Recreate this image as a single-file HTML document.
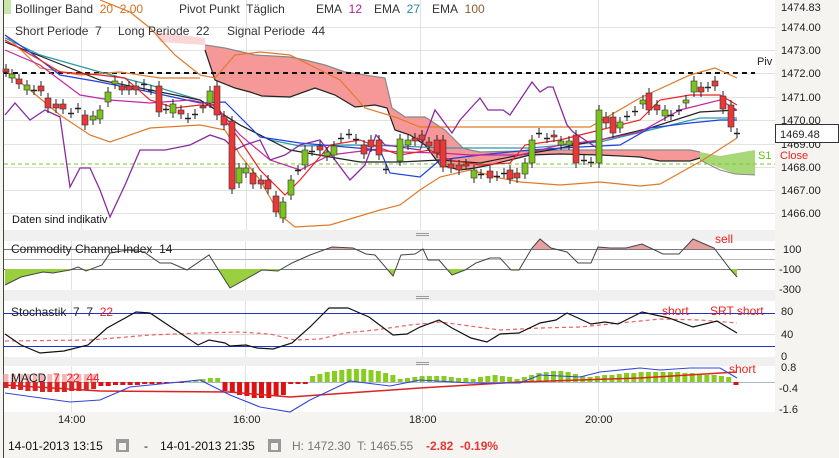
<!DOCTYPE html>
<html><head><meta charset="utf-8"><style>
html,body{margin:0;padding:0;background:#f5f4f0;width:839px;height:458px;overflow:hidden;font-family:"Liberation Sans",sans-serif}
svg{position:absolute;left:0;top:0}
</style></head><body>
<svg id="s" width="839" height="458" xmlns="http://www.w3.org/2000/svg" font-family="Liberation Sans, sans-serif">
<rect x="4" y="0" width="771" height="230" fill="#fff"/>
<rect x="4" y="241" width="771" height="49" fill="#fff"/>
<rect x="4" y="301" width="771" height="56" fill="#fff"/>
<rect x="4" y="366" width="771" height="46" fill="#fff"/>
<line x1="3.5" y1="0" x2="3.5" y2="458" stroke="#444"/>
<rect x="4" y="230" width="771" height="11" fill="#f0f0f0"/>
<rect x="4" y="290" width="771" height="11" fill="#f0f0f0"/>
<rect x="4" y="357" width="771" height="9" fill="#f0f0f0"/>
<g stroke="#999" stroke-width="1"><line x1="416" y1="233.5" x2="429" y2="233.5"/><line x1="416" y1="235.5" x2="429" y2="235.5"/><line x1="416" y1="296.5" x2="429" y2="296.5"/><line x1="416" y1="298.5" x2="429" y2="298.5"/><line x1="416" y1="362.5" x2="429" y2="362.5"/><line x1="416" y1="364.5" x2="429" y2="364.5"/></g>
<g id="grid" stroke="#e2e2e2" stroke-width="1"></g>
<g id="main"></g>
<g id="low"></g>
<g font-size="11" fill="#222">
<text x="781" y="11">1474.83</text><text x="781" y="31">1474.00</text><text x="781" y="54">1473.00</text><text x="781" y="77">1472.00</text><text x="781" y="101">1471.00</text><text x="781" y="124">1470.00</text><text x="781" y="148">1469.00</text><text x="781" y="171">1468.00</text><text x="781" y="194">1467.00</text><text x="781" y="217">1466.00</text>
<text x="783" y="253">100</text><text x="779" y="273">-100</text><text x="779" y="293">-300</text>
<text x="781" y="315">80</text><text x="781" y="338">40</text><text x="781" y="360">0</text>
<text x="781" y="371">0.8</text><text x="779" y="392">-0.4</text><text x="779" y="413">-1.6</text>
<text x="58" y="423">14:00</text><text x="233" y="423">16:00</text><text x="409" y="423">18:00</text><text x="585" y="423">20:00</text>
</g>
<rect x="775.5" y="124.5" width="63" height="18" fill="#fff" stroke="#333"/>
<text x="780" y="138" font-size="11" fill="#222">1469.48</text>
<text x="757" y="65" font-size="11" fill="#222">Piv</text>
<text x="758" y="159" font-size="11" fill="#66bb11">S1</text>
<text x="780" y="159" font-size="11" fill="#e22">Close</text>
<rect x="4" y="0" width="7" height="14" fill="#c8e6a8"/>
<g font-size="12" fill="#333">
<text x="15" y="13">Bollinger Band&#160; <tspan fill="#d8701a">20&#160; 2.00</tspan></text>
<text x="179" y="13">Pivot Punkt&#160; Täglich</text>
<text x="316" y="13">EMA&#160; <tspan fill="#b0208a">12</tspan></text>
<text x="374" y="13">EMA&#160; <tspan fill="#208a9a">27</tspan></text>
<text x="432" y="13">EMA&#160; <tspan fill="#8a6030">100</tspan></text>
<text x="15" y="35">Short Periode&#160; 7</text>
<text x="118" y="35">Long Periode&#160; 22</text>
<text x="227" y="35">Signal Periode&#160; 44</text>
</g>
<text x="12" y="223" font-size="11" fill="#111">Daten sind indikativ</text>
<g font-size="12" fill="#222">
<text x="11" y="253">Commodity Channel Index&#160; 14</text>
<text x="11" y="316">Stochastik&#160; 7&#160; 7&#160; <tspan fill="#e22">22</tspan></text>
<text x="11" y="382">MACD&#160; <tspan fill="#e22">7&#160; 22&#160; 44</tspan></text>
</g>
<g font-size="12" fill="#e22"><text x="715" y="243">sell</text><text x="662" y="315">short</text><text x="710" y="315">SRT short</text><text x="729" y="373">short</text></g>
<g font-size="12">
<text x="8" y="450" fill="#111">14-01-2013 13:15</text>
<text x="144" y="450" fill="#111">-</text>
<text x="160" y="450" fill="#111">14-01-2013 21:35</text>
<text x="292" y="450" fill="#777">H: 1472.30&#160; T: 1465.55</text>
<text x="426" y="450" fill="#e33" font-weight="bold">-2.82&#160; -0.19%</text>
</g>
<g fill="#999"><rect x="116" y="439" width="13" height="13"/><rect x="268" y="439" width="13" height="13"/></g>
<g fill="#f5f4f0"><rect x="119" y="443" width="7" height="7"/><rect x="271" y="443" width="7" height="7"/></g>
</svg>
<script>
var NS="http://www.w3.org/2000/svg";
function el(par,t,a){var e=document.createElementNS(NS,t);for(var k in a)e.setAttribute(k,a[k]);var p=document.getElementById(par);p.insertBefore(e,null);return e;}
function pl(par,pts,c,w,extra){var a={points:pts,fill:"none",stroke:c,"stroke-width":w||1};for(var k in extra)a[k]=extra[k];return el(par,"polyline",a);}
[27,50,73,97,120,144,167,190,213].forEach(function(y){el("grid","line",{x1:4,x2:775,y1:y+.5,y2:y+.5});});
[81,246,420,598].forEach(function(x){el("grid","line",{x1:x+.5,x2:x+.5,y1:0,y2:230});});
[71,245,422,598].forEach(function(x){[[241,290],[301,357],[366,412]].forEach(function(r){el("grid","line",{x1:x+.5,x2:x+.5,y1:r[0],y2:r[1]});});});
el("main","polygon",{points:"155,32 205,38 205,45 160,42",fill:"#fbd6d6"});
var up="205,45 225,48 255,55 290,57 305,60 325,65 345,72 385,78 392,108 405,117 425,117 445,130 455,140 463,148 470,150 480,152 560,150 690,150 700,152";
var lo="700,158 690,161 660,161 640,157 600,155 560,154 530,155 510,160 490,165 475,168 460,170 440,165 425,145 410,135 395,130 387,108 375,105 355,107 335,95 315,88 290,97 262,96 250,92 235,88 215,80 205,50";
el("main","polygon",{points:up+" "+lo,fill:"#f79898"});
pl("main",up,"#888",1.2);pl("main",lo.split(" ").reverse().join(" "),"#222",1.2);
el("main","polygon",{points:"700,152 720,156 755,150 755,175 735,174 720,168 700,160",fill:"#a8d878"});
pl("main","700,160 720,170 735,174 755,175","#888",1);
el("main","line",{x1:4,x2:755,y1:73,y2:73,stroke:"#111","stroke-width":2,"stroke-dasharray":"5,4"});
el("main","line",{x1:4,x2:775,y1:164,y2:164,stroke:"#7c2","stroke-width":1,"stroke-dasharray":"4,3"});
pl("main","100,0 130,12 150,28 175,55 200,75 215,78 235,55 260,52 290,55 310,65 340,80 365,108 395,117 420,127 540,127 590,127 640,98 690,75 715,68 737,78","#e07a2a",1.2);
pl("main","5,70 30,90 60,115 90,135 110,142 150,128 200,125 225,130 240,155 260,180 280,215 295,227 330,225 380,210 400,205 420,190 440,177 470,170 500,178 520,182 560,185 600,182 640,186 660,184 703,160 737,138","#e07a2a",1.2);
pl("main","5,35 40,68 80,75 120,72 160,78 200,78","#e07a2a",1.2);
pl("main","5,38 40,55 100,72 150,85 200,100 240,125 270,140 300,146 350,145 400,146 440,148 470,148 530,148 600,142 650,130 700,118 737,118","#2a9aa8",1.2);
pl("main","5,42 50,60 100,80 200,100 240,125 290,150 330,157 360,162 400,162 440,160 480,163 520,155 550,150 600,140 650,128 700,112 737,110","#222",1.2);
pl("main","5,35 30,52 60,75 100,82 150,92 200,103 225,102 260,137 300,143 380,150 390,173 420,177 440,160 480,155 530,150 580,147 620,145 650,128 690,123 720,120 737,120","#2040e0",1.2);
pl("main","5,50 40,65 80,95 110,100 150,103 190,100 215,105 240,135 270,160 300,170 330,155 370,150 400,152 440,153 470,155 520,155 560,145 600,140 640,132 680,110 720,100 737,110","#c02aa0",1.2);
pl("main","5,40 40,60 60,72 100,75 125,78 150,100 175,108 200,105 215,106 225,120 240,140 260,170 285,195 300,180 330,145 360,140 380,148 400,155 430,150 450,160 480,165 510,163 525,145 560,140 600,130 640,120 660,100 690,95 720,95 737,105","#ee2222",1.2);
pl("main","5,115 15,103 30,120 45,110 60,117 70,187 80,168 90,168 100,190 110,217 125,185 140,150 165,150 190,145 210,135 225,140 235,150 245,145 260,140 270,160 285,155 300,145 320,140 350,180 365,165 376,135 385,145 400,147 420,150 435,110 452,133 460,120 480,98 488,110 503,110 510,115 532,82 540,92 548,87 553,87 567,125 573,132 600,150","#8a2aa0",1.3);
var C=[[6,69,72,'r'],[12,74,78,'g'],[19,79,84,'r'],[27,85,90,'g'],[34,90,90,'d'],[41,86,91,'r'],[48,98,108,'r'],[56,104,108,'r'],[63,104,109,'r'],[71,113,113,'d'],[78,108,108,'d'],[85,115,125,'r'],[93,116,120,'g'],[100,110,119,'g'],[108,92,102,'g'],[115,81,84,'g'],[122,86,90,'r'],[129,86,90,'r'],[136,86,90,'r'],[144,84,86,'d'],[151,90,90,'d'],[159,86,112,'r'],[166,109,109,'d'],[173,104,113,'g'],[181,110,114,'r'],[188,118,118,'d'],[195,114,114,'d'],[203,106,108,'r'],[210,91,103,'g'],[217,86,115,'r'],[224,116,125,'r'],[232,121,189,'r'],[239,168,183,'g'],[246,168,173,'g'],[253,173,184,'r'],[261,180,184,'r'],[268,180,189,'r'],[276,196,212,'r'],[283,202,218,'g'],[291,180,195,'g'],[298,170,170,'d'],[305,150,165,'g'],[312,151,151,'d'],[320,146,150,'r'],[327,152,156,'g'],[334,146,155,'g'],[341,138,138,'d'],[349,134,134,'d'],[356,139,139,'d'],[364,145,154,'r'],[371,140,147,'r'],[379,140,155,'r'],[386,169,169,'d'],[400,139,161,'g'],[408,140,145,'g'],[415,138,141,'r'],[422,135,140,'r'],[429,142,146,'r'],[437,140,153,'r'],[443,140,167,'r'],[451,164,168,'r'],[459,165,170,'r'],[466,164,165,'r'],[474,170,178,'g'],[481,174,174,'d'],[490,171,178,'r'],[497,176,176,'d'],[504,173,173,'d'],[510,170,179,'r'],[517,173,178,'r'],[525,163,174,'g'],[532,140,163,'g'],[539,133,133,'d'],[547,138,138,'d'],[554,135,137,'r'],[561,141,145,'g'],[569,141,145,'g'],[576,135,163,'r'],[584,160,160,'d'],[591,162,162,'d'],[599,110,163,'g'],[606,117,123,'r'],[613,117,133,'r'],[620,122,128,'g'],[627,116,116,'d'],[635,111,111,'d'],[643,100,104,'g'],[649,93,110,'r'],[657,105,110,'r'],[665,110,116,'g'],[671,115,115,'d'],[679,110,110,'d'],[686,100,103,'g'],[694,81,92,'g'],[701,87,92,'r'],[708,87,87,'d'],[715,81,86,'r'],[723,96,109,'r'],[731,105,127,'r'],[737,133,133,'d']];
C.forEach(function(c){var x=c[0];el("main","line",{x1:x,x2:x,y1:c[1]-5,y2:c[2]+5,stroke:"#222"});
 if(c[3]=='d'){el("main","line",{x1:x-3,x2:x+3,y1:c[1]+.5,y2:c[1]+.5,stroke:"#222","stroke-width":1.5});}
 else el("main","rect",{x:x-3,y:c[1],width:6,height:Math.max(2,c[2]-c[1]),fill:c[3]=='g'?"#7cc21e":"#e83838",stroke:"#333","stroke-width":.6});});
[249,259,269].forEach(function(y,i){el("low","line",{x1:4,x2:775,y1:y+.5,y2:y+.5,stroke:i==1?"#bbb":"#777"});});
var cci="5,285 21,277 43,272 53,273 70,270 78,267 86,271 102,265 110,253 128,250 144,252 160,263 171,263 187,270 209,255 230,288 262,270 278,271 292,263 310,255 332,247 353,248 366,254 375,255 393,276 401,255 415,254 423,249 428,260 439,260 452,275 465,270 476,263 490,258 500,258 511,270 519,270 532,248 540,239 551,248 567,252 578,263 591,263 598,247 610,248 626,248 642,244 663,254 679,254 693,239 714,248 730,269 737,277";
var defs=el("low","defs",{});
var c1=document.createElementNS(NS,"clipPath");c1.id="cg";defs.appendChild(c1);var r=document.createElementNS(NS,"rect");r.setAttribute("x",0);r.setAttribute("y",269);r.setAttribute("width",780);r.setAttribute("height",25);c1.appendChild(r);
var c2=document.createElementNS(NS,"clipPath");c2.id="cr";defs.appendChild(c2);r=document.createElementNS(NS,"rect");r.setAttribute("x",0);r.setAttribute("y",230);r.setAttribute("width",780);r.setAttribute("height",19);c2.appendChild(r);
el("low","polygon",{points:"5,269 "+cci+" 737,269",fill:"#9ad040","clip-path":"url(#cg)"});
el("low","polygon",{points:"5,249 "+cci+" 737,249",fill:"#e8a0a0","clip-path":"url(#cr)"});
pl("low",cci,"#444",1);
[313,346].forEach(function(y){el("low","line",{x1:4,x2:775,y1:y+.5,y2:y+.5,stroke:"#2233cc"});});
el("low","line",{x1:4,x2:775,y1:334.5,y2:334.5,stroke:"#ddd"});
pl("low","5,341 90,340 150,335 200,333 240,332 270,334 295,340 320,339 345,333 375,330 410,325 440,322 470,326 500,330 540,328 580,327 620,323 660,319 700,320 737,323","#f06060",1.2,{"stroke-dasharray":"4,3"});
pl("low","5,334 21,345 40,353 64,351 88,345 107,328 136,312 150,313 168,325 198,345 209,340 225,343 230,346 246,345 257,348 273,349 292,343 310,327 329,308 348,308 369,317 393,335 407,334 420,327 439,320 452,328 471,338 487,342 500,334 519,333 540,323 556,320 567,313 578,318 591,324 605,322 618,324 642,312 669,318 693,327 717,321 737,333","#111",1.2);
el("low","line",{x1:4,x2:775,y1:382.5,y2:382.5,stroke:"#aab8cc"});
function H(x){ if(x<100) return -6-4*Math.sin((x-5)/95*3); if(x<200) return -4+ (x-100)/25; if(x<225) return 2+2*Math.sin((x-200)/25*3);
 if(x<290) return -10-6*Math.sin((x-230)/60*3); if(x<310) return -2; if(x<400) return 5+8*Math.sin((x-310)/90*3.14); if(x<470) return 3+3*Math.sin((x-400)/70*3.14);
 if(x<520) return 2+5*Math.sin((x-470)/50*3.14); if(x<590) return 4+7*Math.sin((x-520)/70*3.14); if(x<730) return 5+5*Math.sin((x-590)/140*3.14); return -3;}
for(var x=6;x<=737;x+=7.3){var h=Math.round(H(x));if(Math.abs(h)<1)h=h<0?-1:1;var col=h<0?"#dd1111":"#88cc22";
 if(x<100){el("low","rect",{x:x-2.5,y:382-8,width:5,height:8,fill:"#f4b8b8"});el("low","rect",{x:x-2.5,y:382,width:5,height:-h,fill:"#dd2222"});}
 else el("low","rect",{x:x-2.5,y:h>0?382-h:382,width:5,height:Math.abs(h),fill:col});}
pl("low","5,385 100,391 230,392 290,397 420,388 520,382 640,378 737,372","#dd2222",1.5);
pl("low","5,393 70,402 100,400 130,387 200,380 230,395 260,407 290,412 310,400 350,381 390,386 420,380 470,383 520,383 540,375 580,377 600,372 640,368 660,370 690,368 720,368 737,378","#3344dd",1.1);
</script>
</body></html>
